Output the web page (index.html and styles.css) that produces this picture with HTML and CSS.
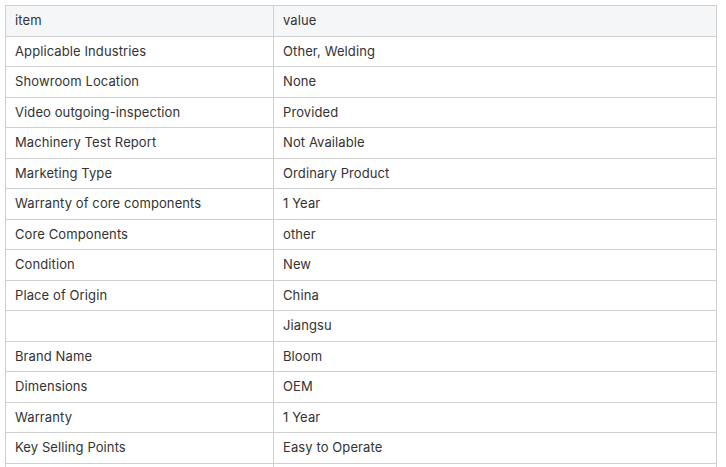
FILE: index.html
```html
<!DOCTYPE html>
<html>
<head>
<meta charset="utf-8">
<link rel="stylesheet" href="styles.css">
</head>
<body>
<table class="spec">
  <colgroup><col class="c1"><col class="c2"></colgroup>
  <thead>
    <tr><th>item</th><th>value</th></tr>
  </thead>
  <tbody>
    <tr><td>Applicable Industries</td><td>Other, Welding</td></tr>
    <tr><td>Showroom Location</td><td>None</td></tr>
    <tr><td>Video outgoing-inspection</td><td>Provided</td></tr>
    <tr><td>Machinery Test Report</td><td>Not Available</td></tr>
    <tr><td>Marketing Type</td><td>Ordinary Product</td></tr>
    <tr><td>Warranty of core components</td><td>1 Year</td></tr>
    <tr><td>Core Components</td><td>other</td></tr>
    <tr><td>Condition</td><td>New</td></tr>
    <tr><td>Place of Origin</td><td>China</td></tr>
    <tr><td></td><td>Jiangsu</td></tr>
    <tr><td>Brand Name</td><td>Bloom</td></tr>
    <tr><td>Dimensions</td><td>OEM</td></tr>
    <tr><td>Warranty</td><td>1 Year</td></tr>
    <tr><td>Key Selling Points</td><td>Easy to Operate</td></tr>
    <tr><td></td><td></td></tr>
  </tbody>
</table>
</body>
</html>
```
FILE: styles.css
```css
html, body {
  margin: 0;
  padding: 0;
  background: #fff;
}
body {
  padding: 5px;
  font-family: Inter, "Noto Sans", sans-serif;
  font-size: 13px;
  letter-spacing: 0.1px;
  color: #333;
}
.spec {
  width: 712px;
  border-collapse: collapse;
  table-layout: fixed;
}
.spec .c1 { width: 268px; }
.spec th, .spec td {
  border: 1px solid #d0d0d0;
  padding: 5px 9px;
  line-height: 19.5px;
  text-align: left;
  font-weight: 400;
  height: 19.5px;
}
.spec thead th {
  background: #f5f6f8;
}
```
